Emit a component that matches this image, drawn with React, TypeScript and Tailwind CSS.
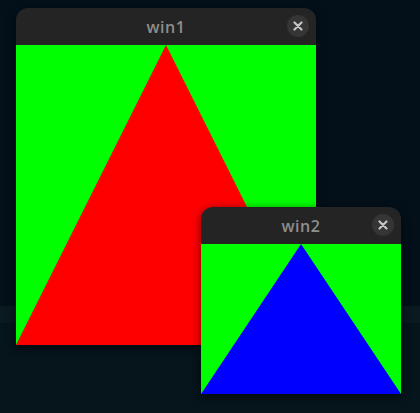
import React from 'react'

function CloseButton() {
  return (
    <div className="w-[22px] h-[22px] rounded-full bg-[#353535] flex items-center justify-center">
      <svg width="10" height="10" viewBox="0 0 10 10">
        <path d="M1.5 1.5 L8.5 8.5 M8.5 1.5 L1.5 8.5" stroke="#c4c4c4" strokeWidth="2.2" strokeLinecap="round" />
      </svg>
    </div>
  )
}

function Win({ title, w, h, color, className }: { title: string; w: number; h: number; color: string; className: string }) {
  return (
    <div className={`absolute flex flex-col rounded-t-[12px] overflow-hidden shadow-[0_2px_10px_rgba(0,0,0,0.55)] ${className}`}>
      <div className="relative h-[37px] bg-[#242424] flex items-center justify-center">
        <span className="text-[16px] font-semibold text-[#8e8e8e] tracking-[0.6px] font-['Open_Sans',sans-serif] leading-none pt-[1px]">{title}</span>
        <div className="absolute right-[7px] top-[7px]">
          <CloseButton />
        </div>
      </div>
      <svg width={w} height={h} viewBox={`0 0 ${w} ${h}`} className="block">
        <rect width={w} height={h} fill="#00ff00" />
        <polygon points={`${w / 2},0 0,${h} ${w},${h}`} fill={color} />
      </svg>
    </div>
  )
}

export default function App() {
  return (
    <div className="relative w-[420px] h-[413px] overflow-hidden bg-[#03101a]">
      <div className="flex flex-col h-full">
        <div className="h-[306px] bg-[#03101a]" />
        <div className="h-[17px] bg-[#0b1920]" />
        <div className="flex-1 bg-[#06141b]" />
      </div>
      <Win title="win1" w={300} h={300} color="#ff0000" className="left-[16px] top-[8px] w-[300px]" />
      <Win title="win2" w={200} h={150} color="#0000ff" className="left-[201px] top-[207px] w-[200px]" />
    </div>
  )
}
